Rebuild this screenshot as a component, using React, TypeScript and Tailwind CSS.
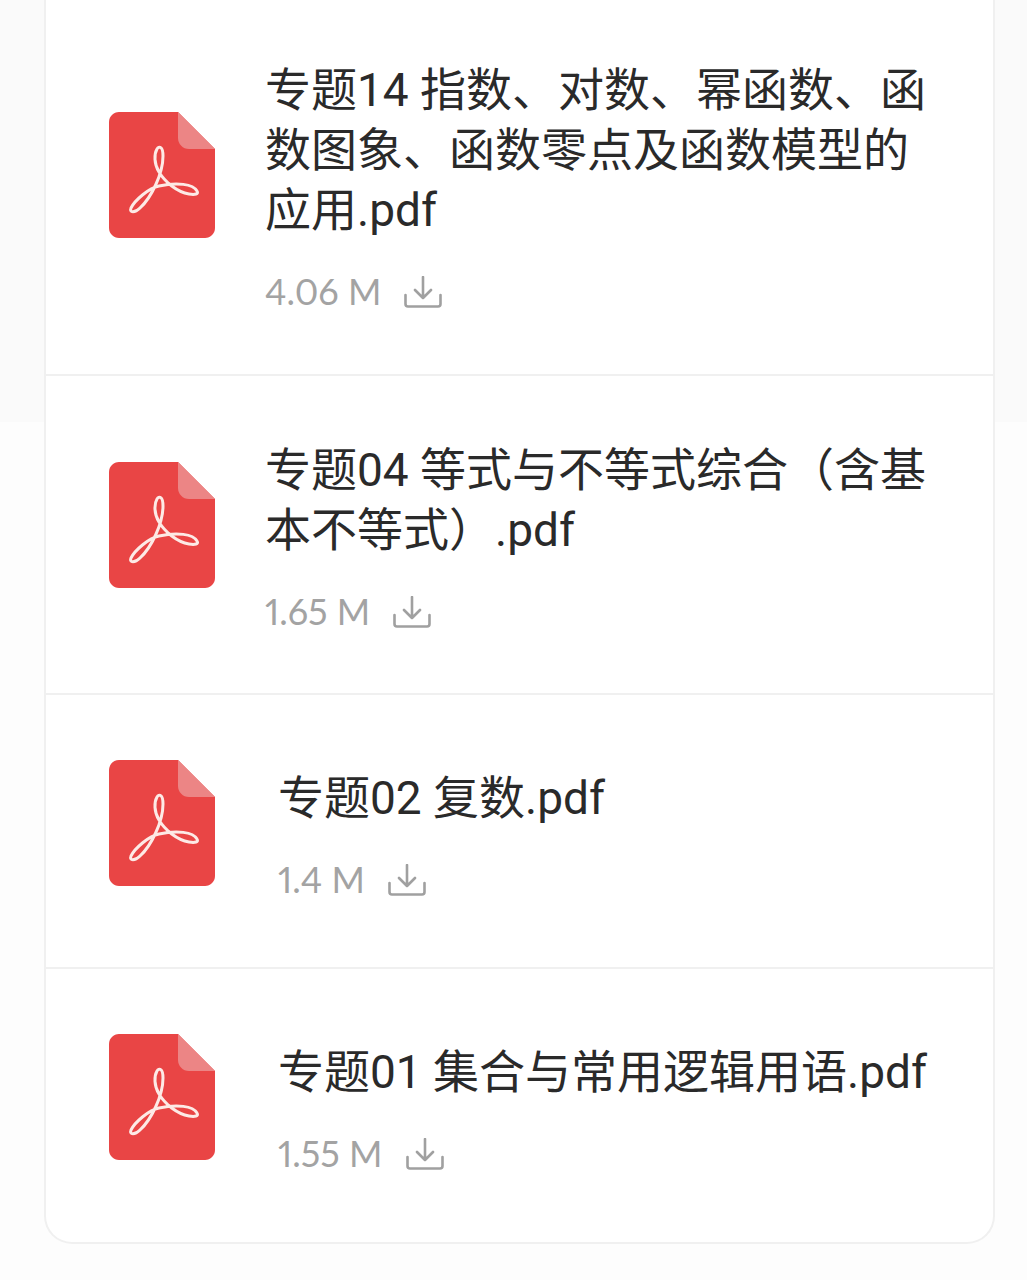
const files = [
  {
    id: 1,
    title: "专题14 指数、对数、幂函数、函数图象、函数零点及函数模型的应用.pdf",
    size: "4.06 M",
    rowClass: "h-[376px] pt-[60px] border-b-2",
    iconClass: "mt-[52px]",
    textClass: "ml-[50px]",
    metaClass: "mt-[32px]",
  },
  {
    id: 2,
    title: "专题04 等式与不等式综合（含基本不等式）.pdf",
    size: "1.65 M",
    rowClass: "h-[319px] pt-[64px] border-b-2",
    iconClass: "mt-[22px]",
    textClass: "ml-[50px]",
    metaClass: "mt-[32px]",
  },
  {
    id: 3,
    title: "专题02 复数.pdf",
    size: "1.4 M",
    rowClass: "h-[274px] pt-[65px] border-b-2",
    iconClass: "",
    textClass: "ml-[63px] mt-[8px]",
    metaClass: "mt-[32px]",
  },
  {
    id: 4,
    title: "专题01 集合与常用逻辑用语.pdf",
    size: "1.55 M",
    rowClass: "h-[273px] pt-[65px]",
    iconClass: "",
    textClass: "ml-[63px] mt-[8px]",
    metaClass: "mt-[32px]",
  },
];

const PdfIcon = ({ className }: { className?: string }) => (
  <svg className={className} width="106" height="126" viewBox="0 0 106 126" fill="none">
    <path
      d="M10 0H69L106 37V116C106 121.5 101.5 126 96 126H10C4.5 126 0 121.5 0 116V10C0 4.5 4.5 0 10 0Z"
      fill="#e94545"
    />
    <path d="M69 0L106 37H80C73.9 37 69 32.1 69 26V0Z" fill="#ec8585" />
    <path
      d="M88 79C84 72 68 70 50 74C40 76 26 88 22 96C20 101 26 101 31 96C42 86 54 62 54 44C54 34 50 34 48 37C45 42 45 52 50 60C56 70 68 80 80 82C86 83 90 82 88 79Z"
      stroke="#fdeae6"
      strokeWidth="3"
      strokeLinejoin="round"
    />
  </svg>
);

const DownloadIcon = () => (
  <svg width="38" height="32" viewBox="0 0 38 32" fill="none" stroke="#a0a0a0" strokeWidth="2.6">
    <path d="M19 1V22M11 14L19 22L27 14" strokeLinecap="round" strokeLinejoin="round" />
    <path d="M1.5 19V28C1.5 29.5 2.5 30.5 4 30.5H34C35.5 30.5 36.5 29.5 36.5 28V19" strokeLinecap="round" />
  </svg>
);

export default function App() {
  return (
    <div className="h-[1280px] overflow-hidden pl-[44px] bg-[linear-gradient(#fafafa_422px,#fdfdfd_422px)]">
      <div className="w-[951px] bg-white border-x-2 border-b-2 border-[#f0f0f0] rounded-b-[28px]">
        {files.map((file) => (
          <div key={file.id} className={`flex items-start pl-[63px] border-[#f0f0f0] ${file.rowClass}`}>
            <PdfIcon className={`shrink-0 ${file.iconClass}`} />
            <div className={`w-[680px] ${file.textClass}`}>
              <div className="text-[46px] leading-[60px] text-[#2a2a2a] font-['Roboto','Noto_Sans_CJK_SC',sans-serif]">{file.title}</div>
              <div className={`flex items-center gap-[23px] h-[40px] text-[36px] proportional-nums text-[#a3a3a3] font-['Lato',sans-serif] ${file.metaClass}`}>
                <span className="-mt-[2px]">{file.size}</span>
                <DownloadIcon />
              </div>
            </div>
          </div>
        ))}
      </div>
    </div>
  );
}
